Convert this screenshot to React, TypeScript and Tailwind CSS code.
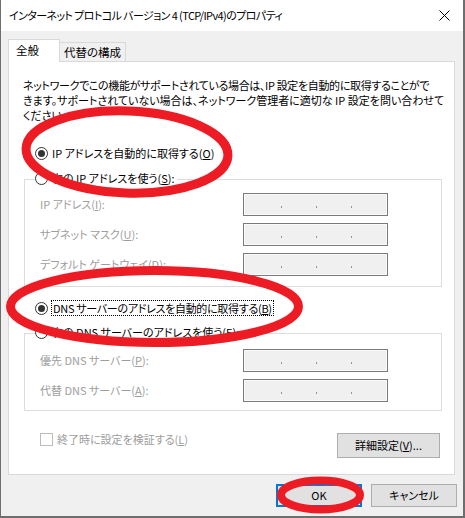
import React from "react";

const Radio = ({ checked }: { checked?: boolean }) => (
  <span className="w-[13px] h-[13px] rounded-full border border-[#333333] bg-white flex items-center justify-center shrink-0">
    {checked && <span className="w-[7px] h-[7px] rounded-full bg-[#333333]" />}
  </span>
);

const IpBox = () => (
  <div className="w-[145px] h-[23px] border border-[#7a7a7a] bg-[#f0f0f0] shadow-[inset_0_0_0_1px_#fbfbfb] flex items-start pt-[12px] pl-[37px] gap-[34px]">
    <span className="w-[1px] h-[2px] bg-[#8796ab]" />
    <span className="w-[1px] h-[2px] bg-[#8796ab]" />
    <span className="w-[1px] h-[2px] bg-[#8796ab]" />
  </div>
);

const Row = ({ label, k, rest }: { label: string; k: string; rest: string }) => (
  <div className="flex items-center h-[23px]">
    <div className="w-[203px] text-[#9d9d9d] whitespace-nowrap">
      {label}(<u>{k}</u>){rest}
    </div>
    <IpBox />
  </div>
);

export default function App() {
  return (
    <div className="relative w-[465px] h-[518px] bg-[#f0f0f0] border-l border-r-2 border-b-2 border-[#6e6e6e] flex flex-col text-[11px] leading-[15px] text-black [font-family:'Noto_Sans_CJK_JP','Noto_Sans',sans-serif] [font-feature-settings:'palt']">
      {/* title bar */}
      <div className="h-[31px] bg-white flex items-center justify-between pl-[8px] pr-[9px] shrink-0">
        <span className="whitespace-nowrap tracking-[-0.6px]">インターネット プロトコル バージョン 4 (TCP/IPv4)のプロパティ</span>
        <svg width="11" height="11" viewBox="0 0 11 11" className="mr-[4px]">
          <path d="M0.5 0.5 L10.5 10.5 M10.5 0.5 L0.5 10.5" stroke="#000" strokeWidth="1" />
        </svg>
      </div>

      <div className="pl-[7px] flex flex-col">
        {/* tabs */}
        <div className="mt-[8px] h-[22px] flex items-end text-[11.5px]">
          <div className="relative z-10 w-[52px] h-[23px] -mb-[1px] bg-white border border-b-0 border-[#d9d9d9] flex items-center pl-[7px] pb-[1px]">
            全般
          </div>
          <div className="w-[66px] h-[19px] bg-[#f0f0f0] border border-l-0 border-b-0 border-[#d9d9d9] flex items-center pl-[4px]">
            代替の構成
          </div>
        </div>

        {/* panel */}
        <div className="w-[447px] h-[414px] bg-white border border-[#d9d9d9] flex flex-col pl-[14px] pr-[14px] pt-[16px]">
          <div className="flex flex-col whitespace-nowrap">
            <span className="tracking-[-0.35px]">ネットワークでこの機能がサポートされている場合は、IP 設定を自動的に取得することがで</span>
            <span>きます。サポートされていない場合は、ネットワーク管理者に適切な IP 設定を問い合わせて</span>
            <span>ください。</span>
          </div>

          <div className="mt-[22px] ml-[12px] h-[16px] flex items-center gap-[4px] whitespace-nowrap">
            <Radio checked />
            <span>
              IP アドレスを自動的に取得する(<u>O</u>)
            </span>
          </div>

          <div className="mt-[18px] ml-[1px] w-[418px] h-[108px] border border-[#dcdcdc] flex flex-col">
            <div className="-mt-[10px] ml-[10px] self-start h-[16px] bg-white pr-[2px] flex items-center gap-[4px] whitespace-nowrap">
              <Radio />
              <span>
                次の IP アドレスを使う(<u>S</u>):
              </span>
            </div>
            <div className="mt-[7px] pl-[15px] flex flex-col gap-[7px]">
              <Row label="IP アドレス" k="I" rest=":" />
              <Row label="サブネット マスク" k="U" rest=":" />
              <Row label="デフォルト ゲートウェイ" k="D" rest=":" />
            </div>
          </div>

          <div className="mt-[13px] ml-[12px] h-[16px] flex items-center gap-[3px] whitespace-nowrap">
            <Radio checked />
            <span className="border border-dotted border-black px-[1px] leading-[14px] tracking-[-0.3px]">
              DNS サーバーのアドレスを自動的に取得する(<u>B</u>)
            </span>
          </div>

          <div className="mt-[17px] ml-[1px] w-[418px] h-[78px] border border-[#dcdcdc] flex flex-col">
            <div className="-mt-[10px] ml-[10px] self-start h-[16px] bg-white pr-[2px] flex items-center gap-[4px] whitespace-nowrap">
              <Radio />
              <span>
                次の DNS サーバーのアドレスを使う(<u>E</u>):
              </span>
            </div>
            <div className="mt-[9px] pl-[15px] flex flex-col gap-[7px]">
              <Row label="優先 DNS サーバー" k="P" rest=":" />
              <Row label="代替 DNS サーバー" k="A" rest=":" />
            </div>
          </div>

          <div className="mt-[22px] flex justify-between items-start">
            <div className="ml-[17px] h-[13px] flex items-center gap-[4px] whitespace-nowrap text-[#9d9d9d]">
              <span className="w-[13px] h-[13px] border border-[#bcbcbc] bg-white shrink-0" />
              <span>
                終了時に設定を検証する(<u>L</u>)
              </span>
            </div>
            <div className="w-[103px] h-[25px] bg-[#e1e1e1] border border-[#adadad] flex items-center justify-center whitespace-nowrap">
              詳細設定(<u>V</u>)...
            </div>
          </div>
        </div>

        {/* bottom buttons */}
        <div className="mt-[9px] flex justify-end gap-[9px] pr-[6px]">
          <div className="w-[86px] h-[23px] bg-[#e1e1e1] border-2 border-[#0078d7] flex items-center justify-center">
            OK
          </div>
          <div className="w-[86px] h-[23px] bg-[#e1e1e1] border border-[#adadad] flex items-center justify-center">
            キャンセル
          </div>
        </div>
      </div>

      {/* red annotation ellipses */}
      <svg className="absolute left-0 top-0 pointer-events-none" width="465" height="518" viewBox="0 0 465 518">
        <ellipse cx="126" cy="152" rx="101" ry="41" fill="none" stroke="#ed1c24" strokeWidth="9" transform="rotate(2 126 152)" />
        <ellipse cx="153.5" cy="306.5" rx="144" ry="36" fill="none" stroke="#ed1c24" strokeWidth="9" />
        <ellipse cx="319.5" cy="495" rx="39.5" ry="14.5" fill="none" stroke="#ed1c24" strokeWidth="8" />
      </svg>
    </div>
  );
}
